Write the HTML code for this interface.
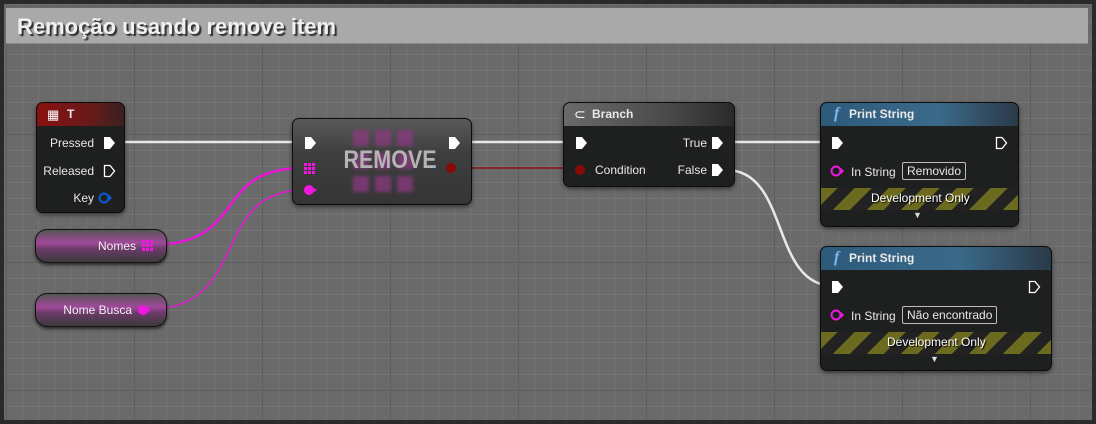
<!DOCTYPE html><html><head><style>
*{margin:0;padding:0;box-sizing:border-box}
body{width:1096px;height:424px;overflow:hidden;background:#2a2a2a;font-family:"Liberation Sans",sans-serif;position:relative}
#bg{position:absolute;left:4px;top:4px;width:1088px;height:416px;background-color:#6a6a6a;
background-image:linear-gradient(#5e5e5e 1px,transparent 1px),linear-gradient(90deg,#5e5e5e 1px,transparent 1px),linear-gradient(#747474 1px,transparent 1px),linear-gradient(90deg,#747474 1px,transparent 1px);
background-size:128px 128px,128px 128px,16px 16px,16px 16px;background-position:2px 2px}
#title{position:absolute;left:6px;top:8px;width:1082px;height:36px;background:#a9a9a9;border-bottom:1px solid #8a8a8a}
#title span{position:absolute;left:11px;top:6px;font-size:22px;font-weight:bold;color:#f0f0f0;text-shadow:2px 2px 1px #303030}
.n{position:absolute;background:#1e1f1f;border:1px solid #0c0c0c;border-radius:7px;box-shadow:0 2px 4px rgba(0,0,0,.5);color:#e8e8e8;font-size:12px}
.h{position:absolute;left:0;top:0;right:0;height:23px;border-radius:6px 6px 0 0;font-weight:bold;padding:4px 0 0 28px}
.t{position:absolute;white-space:nowrap}
svg{position:absolute;left:0;top:0}
.v{position:absolute;border-radius:12px;border:1px solid #111;background:linear-gradient(#555 0%,#a04a9a 40%,#6a3a68 60%,#3a3a3a 100%);box-shadow:0 2px 3px rgba(0,0,0,.6);color:#f0f0f0;font-size:12px}
.dev{position:absolute;left:0;right:0;height:22px;background:repeating-linear-gradient(135deg,#6b6a1e 0 12px,#222 12px 24px)}
.box{position:absolute;border:1px solid #bbb;border-radius:2px;padding:1px 4px;font-size:12px}
</style></head><body>
<div id="bg"></div>
<div id="title"><span>Remoção usando remove item</span></div>

<svg width="1096" height="424">
<path d="M112 142 L304 142" stroke="#e8e8e8" stroke-width="2.5" fill="none"/>
<path d="M460 142 L576 142" stroke="#e8e8e8" stroke-width="2.5" fill="none"/>
<path d="M726 142 L834 142" stroke="#e8e8e8" stroke-width="2.5" fill="none"/>
<path d="M726 170 C790 170 770 286 834 286" stroke="#e8e8e8" stroke-width="2.5" fill="none"/>
<path d="M452 168 L580 168" stroke="#8a0f0f" stroke-width="1.5" fill="none"/>
<path d="M150 245 C250 245 210 168 304 168" stroke="#e815d8" stroke-width="2.5" fill="none"/>
<path d="M150 309 C250 309 210 190 304 190" stroke="#e815d8" stroke-width="1.5" fill="none"/>
</svg>

<div class="n" style="left:36px;top:102px;width:89px;height:111px">
<div class="h" style="background:linear-gradient(90deg,#8a1010,#6a1a1a 60%,#3a2020);padding-left:30px">T</div>
<div class="t" style="left:10px;top:4px;font-size:13px;color:#fff">▦</div>
<div class="t" style="right:30px;top:33px">Pressed</div>
<svg style="left:66px;top:33px" width="14" height="14"><path d="M1 1H7L12 7L7 13H1Z" fill="#fff"/></svg>
<div class="t" style="right:30px;top:61px">Released</div>
<svg style="left:66px;top:61px" width="14" height="14"><path d="M1.5 1.5H7L11.5 7L7 12.5H1.5Z" fill="none" stroke="#fff" stroke-width="1.3"/></svg>
<div class="t" style="right:30px;top:88px">Key</div>
<svg style="left:61px;top:88px" width="16" height="14"><circle cx="6" cy="7" r="4.5" fill="none" stroke="#0a5ad8" stroke-width="2"/><path d="M11 4L14 7L11 10Z" fill="#0a5ad8"/></svg>
</div>

<div class="n" style="left:292px;top:118px;width:180px;height:87px;background:linear-gradient(#5a5a5a,#3e3e3e 40%,#353535)">
<svg style="left:59px;top:10px;filter:blur(1.5px)" width="62" height="64"><g fill="#8a3a80" opacity=".75"><rect x="1" y="1" width="16" height="16"/><rect x="23" y="1" width="16" height="16"/><rect x="45" y="1" width="16" height="16"/><rect x="1" y="24" width="16" height="16"/><rect x="23" y="24" width="16" height="16"/><rect x="45" y="24" width="16" height="16"/><rect x="1" y="47" width="16" height="16"/><rect x="23" y="47" width="16" height="16"/><rect x="45" y="47" width="16" height="16"/></g></svg>
<div class="t" style="left:44px;top:27px;width:92px;text-align:center;font-size:25px;font-weight:bold;color:#b4b4b4;transform:scaleX(.86)">REMOVE</div>
<svg style="left:11px;top:17px" width="14" height="14"><path d="M1 1H7L12 7L7 13H1Z" fill="#fff"/></svg>
<svg style="left:155px;top:17px" width="14" height="14"><path d="M1 1H7L12 7L7 13H1Z" fill="#fff"/></svg>
<svg style="left:11px;top:44px" width="12" height="12"><g fill="#f018e0"><rect x="0" y="0" width="3" height="3"/><rect x="4" y="0" width="3" height="3"/><rect x="8" y="0" width="3" height="3"/><rect x="0" y="4" width="3" height="3"/><rect x="4" y="4" width="3" height="3"/><rect x="8" y="4" width="3" height="3"/><rect x="0" y="8" width="3" height="3"/><rect x="4" y="8" width="3" height="3"/><rect x="8" y="8" width="3" height="3"/></g></svg>
<svg style="left:10px;top:64px" width="16" height="14"><circle cx="6" cy="7" r="5" fill="#f018e0"/><path d="M11 5L14 7L11 9Z" fill="#f018e0"/></svg>
<svg style="left:151px;top:42px" width="16" height="14"><circle cx="7" cy="7" r="5" fill="#8a0808"/></svg>
</div>

<div class="n" style="left:563px;top:102px;width:172px;height:85px">
<div class="h" style="background:linear-gradient(90deg,#6a6a6a,#4a4a4a 60%,#2a2a2a)">Branch</div>
<div class="t" style="left:10px;top:3px;font-size:14px;color:#fff">⊂</div>
<svg style="left:11px;top:33px" width="14" height="14"><path d="M1 1H7L12 7L7 13H1Z" fill="#fff"/></svg>
<div class="t" style="right:27px;top:33px">True</div>
<svg style="left:147px;top:33px" width="14" height="14"><path d="M1 1H7L12 7L7 13H1Z" fill="#fff"/></svg>
<svg style="left:10px;top:60px" width="16" height="14"><circle cx="6" cy="7" r="5" fill="#8a0808"/></svg>
<div class="t" style="left:31px;top:60px">Condition</div>
<div class="t" style="right:27px;top:60px">False</div>
<svg style="left:147px;top:60px" width="14" height="14"><path d="M1 1H7L12 7L7 13H1Z" fill="#fff"/></svg>
</div>

<div class="n" style="left:820px;top:102px;width:199px;height:125px">
<div class="h" style="background:linear-gradient(90deg,#2e5a7a,#3a6a8a 60%,#2a3a48)">Print String</div>
<div class="t" style="left:13px;top:2px;font-size:16px;font-style:italic;font-family:'Liberation Serif',serif;color:#7ab8f0;font-weight:bold">f</div>
<svg style="left:10px;top:33px" width="14" height="14"><path d="M1 1H7L12 7L7 13H1Z" fill="#fff"/></svg>
<svg style="left:174px;top:33px" width="14" height="14"><path d="M1.5 1.5H7L11.5 7L7 12.5H1.5Z" fill="none" stroke="#fff" stroke-width="1.3"/></svg>
<svg style="left:9px;top:61px" width="16" height="14"><circle cx="6" cy="7" r="4.5" fill="none" stroke="#f018e0" stroke-width="2"/><path d="M11 4L14 7L11 10Z" fill="#f018e0"/></svg>
<div class="t" style="left:30px;top:62px">In String</div>
<div class="box" style="left:81px;top:59px">Removido</div>
<div class="dev" style="top:85px"></div>
<div class="t" style="left:50px;top:88px;color:#fff;text-shadow:1px 1px 1px #000">Development Only</div>
<div class="t" style="left:92px;top:107px;font-size:9px;color:#ddd">▼</div>
</div>

<div class="n" style="left:820px;top:246px;width:232px;height:125px">
<div class="h" style="background:linear-gradient(90deg,#2e5a7a,#3a6a8a 60%,#2a3a48)">Print String</div>
<div class="t" style="left:13px;top:2px;font-size:16px;font-style:italic;font-family:'Liberation Serif',serif;color:#7ab8f0;font-weight:bold">f</div>
<svg style="left:10px;top:33px" width="14" height="14"><path d="M1 1H7L12 7L7 13H1Z" fill="#fff"/></svg>
<svg style="left:207px;top:33px" width="14" height="14"><path d="M1.5 1.5H7L11.5 7L7 12.5H1.5Z" fill="none" stroke="#fff" stroke-width="1.3"/></svg>
<svg style="left:9px;top:61px" width="16" height="14"><circle cx="6" cy="7" r="4.5" fill="none" stroke="#f018e0" stroke-width="2"/><path d="M11 4L14 7L11 10Z" fill="#f018e0"/></svg>
<div class="t" style="left:30px;top:62px">In String</div>
<div class="box" style="left:81px;top:59px">Não encontrado</div>
<div class="dev" style="top:85px"></div>
<div class="t" style="left:66px;top:88px;color:#fff;text-shadow:1px 1px 1px #000">Development Only</div>
<div class="t" style="left:109px;top:107px;font-size:9px;color:#ddd">▼</div>
</div>

<div class="v" style="left:35px;top:229px;width:132px;height:34px">
<div class="t" style="right:30px;top:9px">Nomes</div>
<svg style="left:106px;top:10px" width="12" height="12"><g fill="#f018e0"><rect x="0" y="0" width="3" height="3"/><rect x="4" y="0" width="3" height="3"/><rect x="8" y="0" width="3" height="3"/><rect x="0" y="4" width="3" height="3"/><rect x="4" y="4" width="3" height="3"/><rect x="8" y="4" width="3" height="3"/><rect x="0" y="8" width="3" height="3"/><rect x="4" y="8" width="3" height="3"/><rect x="8" y="8" width="3" height="3"/></g></svg>
</div>
<div class="v" style="left:35px;top:293px;width:132px;height:34px">
<div class="t" style="right:34px;top:9px">Nome Busca</div>
<svg style="left:101px;top:9px" width="18" height="14"><circle cx="6" cy="7" r="5" fill="#f018e0"/><path d="M11 5L14 7L11 9Z" fill="#f018e0"/></svg>
</div>
</body></html>
